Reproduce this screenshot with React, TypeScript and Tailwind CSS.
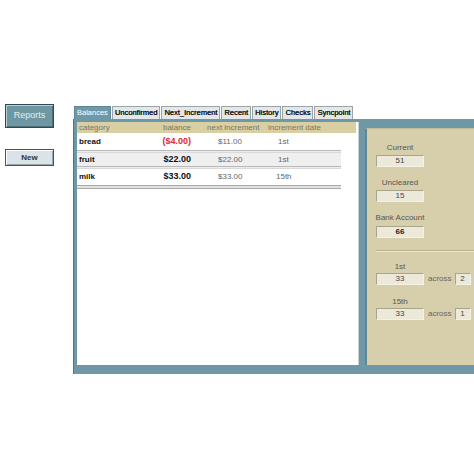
import React from "react";

const rows = [
  { cat: "bread", bal: "($4.00)", red: true, next: "$11.00", date: "1st", bg: "bg-white", h: "h-[17px]" },
  { cat: "fruit", bal: "$22.00", red: false, next: "$22.00", date: "1st", bg: "bg-[#efefef]", h: "h-[13px]" },
  { cat: "milk", bal: "$33.00", red: false, next: "$33.00", date: "15th", bg: "bg-white", h: "h-[15px]" },
];

const tabs = ["Balances", "Unconfirmed", "Next_Increment", "Recent", "History", "Checks", "Syncpoint"];

function Box({ v, w = "w-[48px]", bold = false }: { v: string; w?: string; bold?: boolean }) {
  return (
    <div
      className={`${w} h-[12px] bg-[#ece8da] border border-t-[#a9a48c] border-l-[#a9a48c] border-r-[#f4f1e6] border-b-[#f4f1e6] flex items-center justify-center text-[8px] leading-none ${bold ? "font-bold text-[#222]" : "text-[#444]"}`}
    >
      {v}
    </div>
  );
}

export default function App() {
  return (
    <div
      className="w-[474px] h-[474px] bg-white overflow-hidden flex pt-[104px]"
      style={{ fontFamily: '"Liberation Sans", Arial, sans-serif' }}
    >
      {/* left buttons */}
      <div className="w-[73px] shrink-0 pl-[5px] flex flex-col">
        <div className="w-[49px] h-[24px] bg-[#6f97a3] border border-[#2f4a52] shadow-[inset_1px_1px_0_#b9d0d6,inset_-1px_-1px_0_#4c6f78] flex items-center justify-center text-[9px] text-[#e6eef0]">
          Reports
        </div>
        <div className="mt-[21px] w-[49px] h-[17px] bg-[#d9e3e8] border border-[#4a5558] shadow-[inset_1px_1px_0_#ffffff,inset_-1px_-1px_0_#9aa6aa] flex items-center justify-center text-[8px] font-bold text-[#333]">
          New
        </div>
      </div>

      {/* main */}
      <div className="flex-1 flex flex-col min-w-0">
        <div className="mt-[2px] h-[13px] flex items-end">
          {tabs.map((t, i) => (
            <div
              key={t}
              className={`h-[13px] px-[2px] mr-[1px] flex items-center text-[7.5px] leading-none border border-b-0 ${
                i === 0
                  ? "bg-[#6f99a7] text-white border-[#5d8694] ml-[1px]"
                  : "bg-[#e3e7e9] text-[#111] border-[#9aa5a9] [text-shadow:0.3px_0_0_#111]"
              }`}
            >
              {t}
            </div>
          ))}
        </div>
        <div className="h-[255px] bg-[#6f98a6] border-l border-l-[#4f7582] flex pl-[3px] pt-[3px] pb-[9px]">
          {/* white table panel */}
          <div className="w-[282px] shrink-0 bg-white border-r border-r-[#c9d3d6] flex flex-col">
            <div className="h-[11px] bg-[#d8cfa5] mr-[2px] flex items-center text-[8px] text-[#7b7560] leading-none">
              <div className="w-[80px] pl-[2px]">category</div>
              <div className="w-[34px] text-right">balance</div>
              <div className="w-[77px] pl-[16px]">next increment</div>
              <div className="flex-1">increment date</div>
            </div>
            {rows.map((r, i) => (
              <div key={r.cat} className="flex flex-col">
                {i > 0 && (
                  <div className="w-[264px] h-[3px] border-t border-t-[#b9b9b9] border-b border-b-[#d9d9d9] bg-[#ececec]" />
                )}
                <div className={`${r.h} ${r.bg} w-[264px] flex items-center text-[8px] leading-none`}>
                  <div className="w-[80px] pl-[2px] font-bold text-[8px] text-[#111]">{r.cat}</div>
                  <div className={`w-[34px] text-right font-bold text-[9px] ${r.red ? "text-[#e0282e]" : "text-[#111]"}`}>{r.bal}</div>
                  <div className="w-[77px] pl-[27px] text-[#666]">{r.next}</div>
                  <div className={`flex-1 ${r.date === "15th" ? "pl-[8px]" : "pl-[10px]"} text-[#666]`}>{r.date}</div>
                </div>
              </div>
            ))}
            <div className="w-[264px] h-[4px] mt-[1px] border-t border-t-[#a9a9a9] border-b border-b-[#a9a9a9] bg-[#e2e2e2]" />
          </div>

          {/* right beige panel */}
          <div className="ml-[6px] mt-[6px] flex-1 bg-[#d7cfab] border-l-2 border-l-[#5f8896] border-t border-t-[#c3bb98] flex flex-col pl-[9px] pt-[15px]">
            <div className="w-[48px] flex flex-col items-center">
              <div className="text-[8px] text-[#555] leading-none">Current</div>
              <div className="mt-[3px]"><Box v="51" /></div>
              <div className="mt-[12px] text-[8px] text-[#555] leading-none">Uncleared</div>
              <div className="mt-[3px]"><Box v="15" /></div>
              <div className="mt-[12px] text-[8px] text-[#555] leading-none whitespace-nowrap">Bank Account</div>
              <div className="mt-[4px]"><Box v="66" bold /></div>
            </div>
            <div className="mt-[12px] h-[2px] border-t border-t-[#b9b193] border-b border-b-[#ece6cf]" />
            <div className="mt-[11px] flex flex-col">
              <div className="w-[48px] text-center text-[8px] text-[#555] leading-none">1st</div>
              <div className="mt-[2px] flex items-center">
                <Box v="33" />
                <span className="ml-[4px] text-[8px] text-[#666] leading-none">across</span>
                <div className="ml-[3px]"><Box v="2" w="w-[16px]" /></div>
              </div>
              <div className="mt-[13px] w-[48px] text-center text-[8px] text-[#555] leading-none">15th</div>
              <div className="mt-[2px] flex items-center">
                <Box v="33" />
                <span className="ml-[4px] text-[8px] text-[#666] leading-none">across</span>
                <div className="ml-[3px]"><Box v="1" w="w-[16px]" /></div>
              </div>
            </div>
          </div>
        </div>
      </div>
    </div>
  );
}
